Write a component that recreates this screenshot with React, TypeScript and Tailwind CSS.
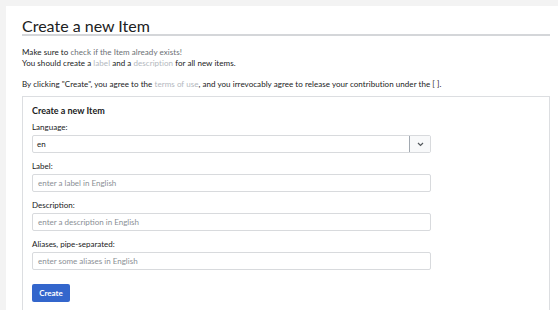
import React from 'react';

const fields = [
  { id: 'label', label: 'Label:', placeholder: 'enter a label in English' },
  { id: 'description', label: 'Description:', placeholder: 'enter a description in English' },
  { id: 'aliases', label: 'Aliases, pipe-separated:', placeholder: 'enter some aliases in English' },
];

const App: React.FC = () => {
  return (
    <div className="min-h-screen bg-[#f3f3f3] pt-[6px] pl-[6px] font-['Lato','Liberation_Sans',sans-serif] text-[#202122]">
      <div className="bg-white min-h-[304px] pl-[16px] pr-[8px] pt-[12px]">
        <h1 className="text-[16px] leading-[16px] border-b-2 border-[#d4d6d9]">
          Create a new Item
        </h1>

        <div className="mt-[11px] text-[8px] leading-[11px] tracking-[0.05px]">
          <p>
            Make sure to <span className="text-[#6b6f74]">check if the Item already exists!</span>
          </p>
          <p>
            You should create a <span className="text-[#b3b8be]">label</span> and a{' '}
            <span className="text-[#b3b8be]">description</span> for all new items.
          </p>
          <p className="mt-[10px]">
            By clicking "Create", you agree to the <span className="text-[#b3b8be]">terms of use</span>, and you
            irrevocably agree to release your contribution under the [ ].
          </p>
        </div>

        <form className="mt-[6px] border border-[#dcdee1] pl-[9px] pt-[9px] pb-[8px]">
          <h2 className="text-[9px] leading-[10px] font-bold">Create a new Item</h2>

          <div className="mt-[6px]">
            <div className="text-[8px] leading-[10px]">Language:</div>
            <div className="mt-[3px] mb-[8px] w-[399px] h-[18px] flex border border-[#d8dadd] rounded-[2px]">
              <div className="flex-1 pl-[4px] text-[8px] leading-[16px]">en</div>
              <div className="w-[21px] flex items-center justify-center border-l border-[#a2a9b1] bg-[#f8f9fa]">
                <svg width="7" height="5" viewBox="0 0 7 5">
                  <path d="M1 1 L3.5 3.5 L6 1" stroke="#54595d" strokeWidth="1.2" fill="none" />
                </svg>
              </div>
            </div>
          </div>

          {fields.map((f) => (
            <div key={f.id}>
              <div className="text-[8px] leading-[10px]">{f.label}</div>
              <div className="mt-[3px] mb-[8px] w-[399px] h-[18px] border border-[#d8dadd] rounded-[2px] pl-[5px] text-[8px] leading-[16px] text-[#8a8f95]">
                {f.placeholder}
              </div>
            </div>
          ))}

          <button
            type="button"
            className="-mt-[1px] w-[38px] h-[18px] bg-[#3366cc] rounded-[2px] text-white text-[8px] font-bold"
          >
            Create
          </button>
        </form>
      </div>
    </div>
  );
};

export default App;
